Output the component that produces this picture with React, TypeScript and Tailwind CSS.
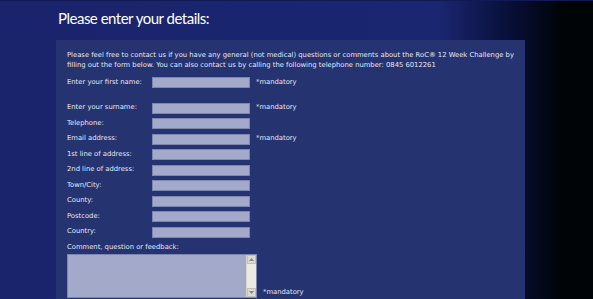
import React from 'react';

const font = { fontFamily: '"DejaVu Sans", Verdana, sans-serif' };

const fields: { label: string; mandatory?: boolean; extraGap?: boolean }[] = [
  { label: 'Enter your first name:', mandatory: true },
  { label: 'Enter your surname:', mandatory: true, extraGap: true },
  { label: 'Telephone:' },
  { label: 'Email address:', mandatory: true },
  { label: '1st line of address:' },
  { label: '2nd line of address:' },
  { label: 'Town/City:' },
  { label: 'County:' },
  { label: 'Postcode:' },
  { label: 'Country:' },
];

const FieldRow: React.FC<{ label: string; mandatory?: boolean; extraGap?: boolean }> = ({ label, mandatory, extraGap }) => (
  <div className={`flex items-center h-[11px] ${extraGap ? 'mt-[14.5px]' : 'mt-[4.5px]'} first:mt-0`}>
    <span className="w-[85px] shrink-0 whitespace-nowrap">{label}</span>
    <div className="w-[98px] h-[11px] bg-[#a3a9c9] border border-[#7d86b2]" />
    {mandatory && <span className="ml-[6px] whitespace-nowrap">*mandatory</span>}
  </div>
);

export default function App() {
  return (
    <div className="w-full h-[299px] overflow-hidden bg-[linear-gradient(to_right,#19246c_0%,#1a2670_74%,#080f38_86%,#000406_95%)]">
      <div className="pl-[56px] border-t border-[#111a55]">
        <h1
          className="h-[39px] pt-[6px] pl-[2px] text-[15px] leading-[22px] tracking-[-0.5px] text-white"
          style={{ fontFamily: '"Lato", "Open Sans", sans-serif' }}
        >
          Please enter your details:
        </h1>

        <div className="w-[469px] h-[300px] bg-[#253371] px-[11px] pt-[11px] text-[6.8px] leading-[9.5px] text-[#e6e8f4]" style={font}>
          <p className="whitespace-nowrap">
            Please feel free to contact us if you have any general (not medical) questions or comments about the RoC® 12 Week Challenge by
            <br />
            filling out the form below. You can also contact us by calling the following telephone number: 0845 6012261
          </p>

          <div className="mt-[7px] flex flex-col">
            {fields.map((f) => (
              <FieldRow key={f.label} {...f} />
            ))}
          </div>

          <div className="mt-[5px]">Comment, question or feedback:</div>

          <div className="mt-[2px] flex items-end">
            <div className="w-[190px] h-[44px] flex bg-[#a3a9c9] border border-[#7d86b2]">
              <div className="flex-1" />
              <div className="w-[10px] h-full bg-[#ecebe3] flex flex-col justify-between border-l border-[#d6d5cc]">
                <div className="h-[9px] bg-[#dcdbd2] border border-[#c3c2b8] flex items-center justify-center">
                  <svg width="5" height="3" viewBox="0 0 5 3"><path d="M0 3 L2.5 0 L5 3 Z" fill="#8a8a80" /></svg>
                </div>
                <div className="h-[9px] bg-[#dcdbd2] border border-[#c3c2b8] flex items-center justify-center">
                  <svg width="5" height="3" viewBox="0 0 5 3"><path d="M0 0 L2.5 3 L5 0 Z" fill="#8a8a80" /></svg>
                </div>
              </div>
            </div>
            <span className="ml-[6px] mb-[1px] whitespace-nowrap">*mandatory</span>
          </div>
        </div>
      </div>
    </div>
  );
}
